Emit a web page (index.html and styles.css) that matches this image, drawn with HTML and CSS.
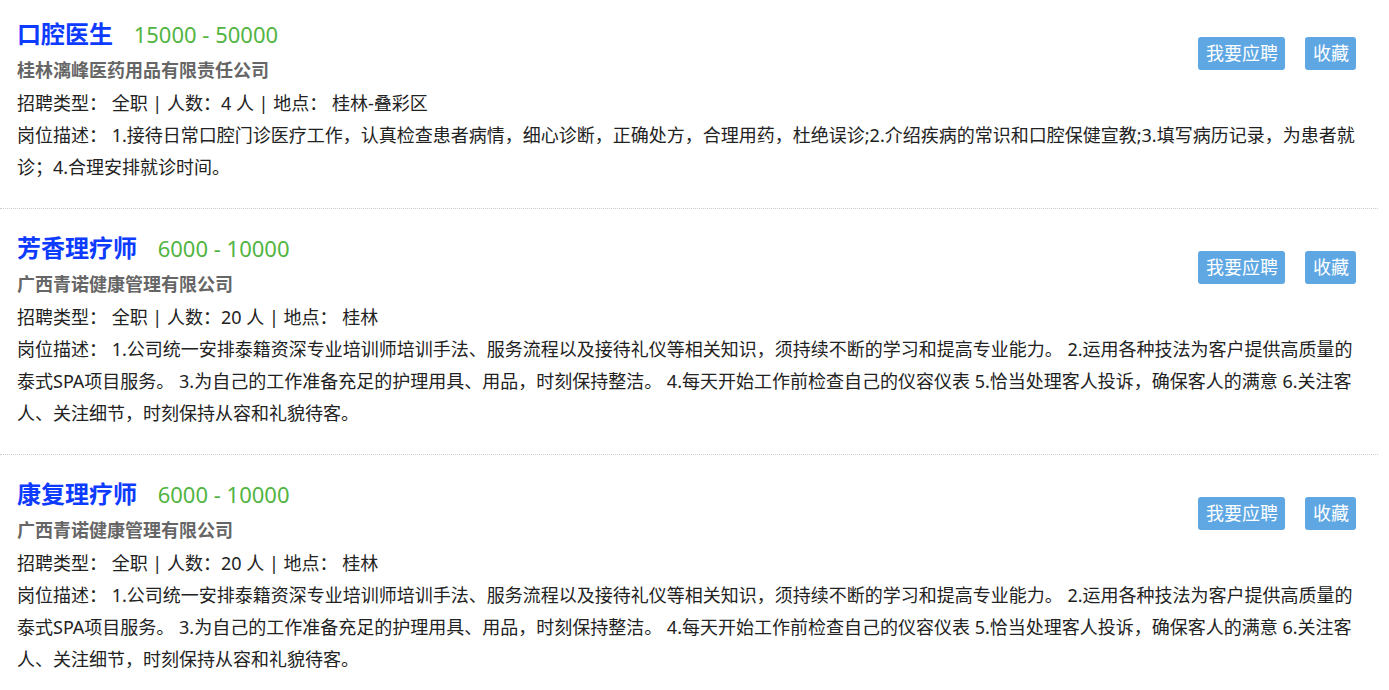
FILE: index.html
```html
<!doctype html>
<html lang="zh-CN">
	<head>
		<meta charset="utf-8">
		<link rel="stylesheet" href="styles.css">
		<title>招聘信息</title>
	</head>
	<body>
		<div class="job-list">
			<div class="job">
				<div class="job-btns">
					<a class="btn" href="#">我要应聘</a>
					<a class="btn" href="#">收藏</a>
				</div>
				<div class="job-title">
					<a class="job-name" href="#">口腔医生</a>
					<span class="salary">15000 - 50000</span>
				</div>
				<div class="company">桂林漓峰医药用品有限责任公司</div>
				<div class="info">招聘类型：&nbsp;全职 | 人数：4 人 | 地点：&nbsp;桂林-叠彩区</div>
				<div class="desc">岗位描述：&nbsp;1.接待日常口腔门诊医疗工作，认真检查患者病情，细心诊断，正确处方，合理用药，杜绝误诊;2.介绍疾病的常识和口腔保健宣教;3.填写病历记录，为患者就诊；4.合理安排就诊时间。</div>
			</div>
			<div class="job">
				<div class="job-btns">
					<a class="btn" href="#">我要应聘</a>
					<a class="btn" href="#">收藏</a>
				</div>
				<div class="job-title">
					<a class="job-name" href="#">芳香理疗师</a>
					<span class="salary">6000 - 10000</span>
				</div>
				<div class="company">广西青诺健康管理有限公司</div>
				<div class="info">招聘类型：&nbsp;全职 | 人数：20 人 | 地点：&nbsp;桂林</div>
				<div class="desc">岗位描述：&nbsp;1.公司统一安排泰籍资深专业培训师培训手法、服务流程以及接待礼仪等相关知识，须持续不断的学习和提高专业能力。 2.运用各种技法为客户提供高质量的泰式SPA项目服务。 3.为自己的工作准备充足的护理用具、用品，时刻保持整洁。 4.每天开始工作前检查自己的仪容仪表 5.恰当处理客人投诉，确保客人的满意 6.关注客人、关注细节，时刻保持从容和礼貌待客。</div>
			</div>
			<div class="job">
				<div class="job-btns">
					<a class="btn" href="#">我要应聘</a>
					<a class="btn" href="#">收藏</a>
				</div>
				<div class="job-title">
					<a class="job-name" href="#">康复理疗师</a>
					<span class="salary">6000 - 10000</span>
				</div>
				<div class="company">广西青诺健康管理有限公司</div>
				<div class="info">招聘类型：&nbsp;全职 | 人数：20 人 | 地点：&nbsp;桂林</div>
				<div class="desc">岗位描述：&nbsp;1.公司统一安排泰籍资深专业培训师培训手法、服务流程以及接待礼仪等相关知识，须持续不断的学习和提高专业能力。 2.运用各种技法为客户提供高质量的泰式SPA项目服务。 3.为自己的工作准备充足的护理用具、用品，时刻保持整洁。 4.每天开始工作前检查自己的仪容仪表 5.恰当处理客人投诉，确保客人的满意 6.关注客人、关注细节，时刻保持从容和礼貌待客。</div>
			</div>
		</div>
	</body>
</html>
```

FILE: styles.css
```css
body {
	background: #fff;
	color: #222;
	font: 18px/32px "Noto Sans", "Noto Sans CJK SC", sans-serif;
	margin: 0;
}

a {
	text-decoration: none;
}

.job-list {
	width: 1378px;
}

.job {
	border-bottom: 1px dotted #ccc;
	padding: 21px 22px 25px 17px;
}

.job:first-child {
	padding-top: 16px;
}

.job:last-child {
	border-bottom: none;
}

.job-btns {
	display: flex;
	float: right;
	gap: 20px;
	margin-top: 21px;
}

.btn {
	background: #5ea7e3;
	border-radius: 3px;
	color: #fff;
	font-size: 18px;
	height: 33px;
	line-height: 33px;
	padding: 0 7px 0 8px;
}

.job-title {
	line-height: 36px;
}

.job-name {
	color: #0d3bff;
	font-size: 24px;
	font-weight: 700;
}

.salary {
	color: #52b442;
	font-size: 22px;
	margin-left: 16px;
}

.company {
	color: #666;
	font-weight: 700;
	line-height: 33px;
}
```
